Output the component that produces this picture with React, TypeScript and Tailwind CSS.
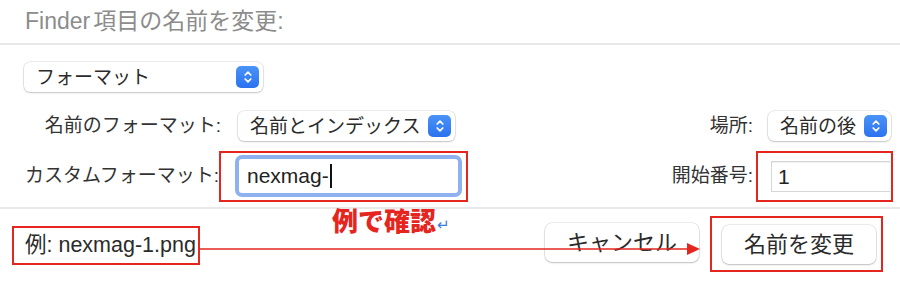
import React from "react";

const Stepper = () => (
  <div className="w-[23px] h-[22px] rounded-[5px] bg-gradient-to-b from-[#4a93f8] to-[#2b72ef] flex items-center justify-center shrink-0">
    <svg width="10" height="14" viewBox="0 0 10 14" fill="none">
      <path d="M2.2 5 L5 2.2 L7.8 5" stroke="white" strokeWidth="1.7" strokeLinecap="round" strokeLinejoin="round" />
      <path d="M2.2 9 L5 11.8 L7.8 9" stroke="white" strokeWidth="1.7" strokeLinecap="round" strokeLinejoin="round" />
    </svg>
  </div>
);

const Popup = ({ text, className = "" }: { text: string; className?: string }) => (
  <div
    className={`h-[30px] rounded-[6px] bg-white flex items-center justify-between pl-[12px] pr-[4px] shadow-[0_0_0_0.5px_rgba(0,0,0,0.14),0_1px_2px_rgba(0,0,0,0.18)] ${className}`}
  >
    <span className="text-[19px] text-[#2b2b2b] leading-none whitespace-nowrap">{text}</span>
    <Stepper />
  </div>
);

const Button = ({ children, className = "" }: { children: React.ReactNode; className?: string }) => (
  <div
    className={`h-[39px] rounded-[7px] bg-white flex items-center justify-center text-[22px] text-[#2b2b2b] shadow-[0_0_0_0.5px_rgba(0,0,0,0.14),0_1px_2px_rgba(0,0,0,0.2)] ${className}`}
  >
    {children}
  </div>
);

export default function App() {
  return (
    <div className="relative w-[900px] h-[281px] bg-white overflow-hidden font-['Liberation_Sans','Noto_Sans_CJK_JP',sans-serif]">
      {/* Title */}
      <div className="h-[43px] flex items-center pl-[25px] text-[23px] text-[#8c8c8c] whitespace-nowrap">
        <span>Finder</span>
        <span className="ml-[3px]">項目の名前を変更:</span>
      </div>
      <div className="h-[2px] bg-[#e8e8e8]" />

      {/* Body */}
      <div className="pt-[17px]">
        <Popup text="フォーマット" className="ml-[24px] w-[239px]" />

        {/* Row: name format / location */}
        <div className="mt-[19px] h-[30px] flex items-center">
          <div className="w-[238px] pr-[17px] text-right text-[19px] text-[#333] whitespace-nowrap">
            名前のフォーマット:
          </div>
          <Popup text="名前とインデックス" className="w-[217px]" />
          <div className="flex-1 text-right pr-[15px] text-[19px] text-[#333] whitespace-nowrap">場所:</div>
          <Popup text="名前の後" className="w-[123px] mr-[9px]" />
        </div>

        {/* Row: custom format / start number */}
        <div className="mt-[10px] h-[51px] flex items-center">
          <div className="w-[219px] pl-[25px] text-[19px] text-[#333] whitespace-nowrap overflow-visible">
            カスタムフォーマット:
          </div>
          <div className="w-[249px] h-[51px] border-2 border-[#e5261f] pl-[14px] pr-[4px] pt-[2px]">
            <div className="w-[227px] h-[42px] rounded-[7px] border-[4px] border-[#8eb2ef] bg-white flex items-center pl-[8px] text-[21px] text-[#222]">
              <span>nexmag-</span>
              <span className="inline-block w-[2px] h-[24px] bg-[#111] ml-[1px]" />
            </div>
          </div>
          <div className="flex-1 text-right pr-[3px] text-[19px] text-[#333] whitespace-nowrap">開始番号:</div>
          <div className="w-[137px] h-[51px] border-2 border-[#e5261f] pl-[13px] pr-[1px] flex items-center mr-[7px]">
            <div className="w-full h-[31px] bg-white border border-[#d6d6d6] border-r-0 shadow-[inset_0_1px_0_rgba(0,0,0,0.06)] flex items-center pl-[6px] text-[21px] text-[#222]">
              1
            </div>
          </div>
        </div>
      </div>

      <div className="mt-[5px] h-[2px] bg-[#e8e8e8]" />

      {/* Footer */}
      <div className="h-[72px] flex items-center pl-[12px] pr-[17px]">
        <div className="w-[188px] h-[39px] mt-[1px] border-2 border-[#e5261f] flex items-center pl-[11px] text-[21.5px] text-[#2b2b2b] whitespace-nowrap">
          例: nexmag-1.png
        </div>
        <div className="flex-1" />
        <Button className="w-[154px] -mt-[5px]">キャンセル</Button>
        <div className="ml-[11px] w-[173px] h-[56px] -mt-[2px] border-2 border-[#e5261f] flex items-center pl-[10px]">
          <Button className="w-[154px]">名前を変更</Button>
        </div>
      </div>

      {/* Annotations */}
      <div className="absolute left-[332px] top-[204px] flex items-end whitespace-nowrap">
        <span className="text-[26px] leading-[31px] font-black text-[#e5261f] font-['Noto_Sans_CJK_JP',sans-serif]">
          例で確認
        </span>
        <span className="ml-[1px] mb-[3px] text-[15px] leading-none text-[#3b7de0]">↵</span>
      </div>
      <svg className="absolute left-0 top-0 pointer-events-none" width="900" height="281">
        <line x1="200" y1="249" x2="690" y2="249" stroke="#e5261f" strokeWidth="1.5" />
        <polygon points="687,243 700,249 687,255" fill="#e5261f" />
      </svg>
    </div>
  );
}
